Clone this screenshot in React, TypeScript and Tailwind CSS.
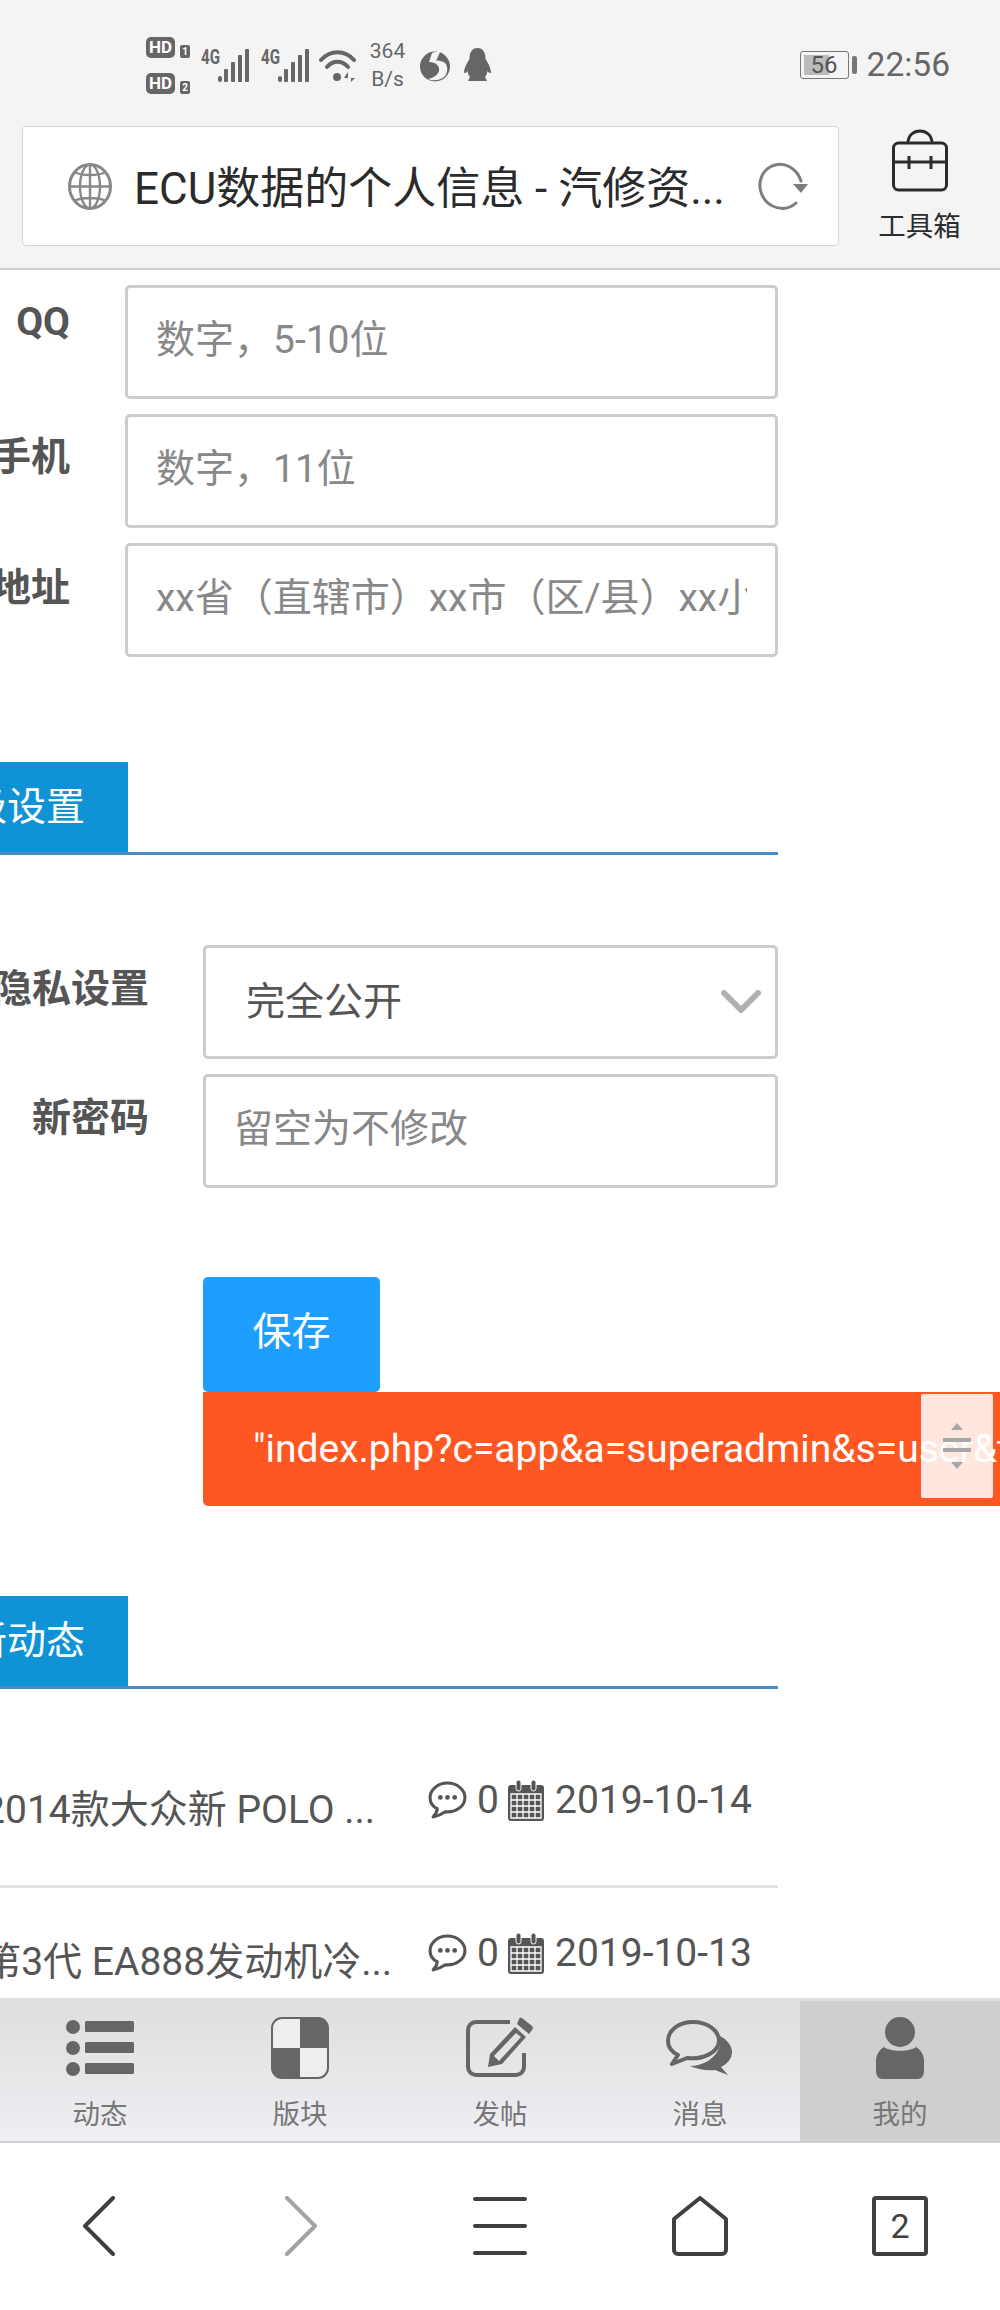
import { ReactNode } from "react";

const Bars = () => (
  <svg width="32" height="33" viewBox="0 0 32 33" fill="#666">
    <rect x="0" y="27" width="4" height="6" rx="2" />
    <rect x="6" y="20" width="4" height="13" rx="1" />
    <rect x="13" y="13" width="4" height="20" rx="1" />
    <rect x="20" y="6" width="4" height="27" rx="1" />
    <rect x="27" y="0" width="4" height="33" rx="1" />
  </svg>
);

const HdBadge = ({ n }: { n: string }) => (
  <div className="flex items-end gap-[5px]">
    <span className="w-[29px] h-[21px] rounded-[5px] bg-[#666] text-white text-[17px] leading-[21px] font-bold text-center">
      HD
    </span>
    <span className="w-[10px] h-[13px] rounded-[2px] bg-[#666] text-white text-[10px] leading-[13px] font-bold text-center">
      {n}
    </span>
  </div>
);

const SignalGroup = () => (
  <div className="ml-[11px] flex items-start">
    <span className="text-[21px] leading-[17px] font-bold w-[17px] scale-x-[0.72] origin-left">4G</span>
    <Bars />
  </div>
);

const StatusBar = () => (
  <div className="h-[126px] flex items-center pl-[146px] pr-[50px] pt-[4px] text-[#666]">
    <div className="flex flex-col gap-[15px]">
      <HdBadge n="1" />
      <HdBadge n="2" />
    </div>
    <SignalGroup />
    <SignalGroup />
    <svg className="ml-[9px]" width="37" height="33" viewBox="0 0 37 33" fill="none">
      <path d="M2 11 C11 0.5 26 0.5 35 11" stroke="#666" strokeWidth="4" strokeLinecap="round" />
      <path d="M8 18 C14 11 23 11 29 18" stroke="#666" strokeWidth="4" strokeLinecap="round" />
      <circle cx="18" cy="28" r="4" fill="#666" />
      <path d="M29 23 L25 29 H29 Z M32 23 V33 L36 29 H32 Z" fill="#666" />
    </svg>
    <div className="ml-[13px] w-[37px] flex flex-col items-center text-[21px] leading-[28px] -mt-[1px]">
      <span>364</span>
      <span>B/s</span>
    </div>
    <svg className="ml-[14px]" width="30" height="33" viewBox="0 0 30 33">
      <circle cx="15" cy="17.5" r="15" fill="#666" />
      <path d="M21 1 L12 4 L9 13 C16 13 20 17 19 22 C18 26 13 29 8 30 C13 32 20 32 25 27 C28 23 28 17 25 14 C22 12 18 11 16 12 Z" fill="#f4f4f4" />
    </svg>
    <svg className="ml-[14px]" width="27" height="35" viewBox="0 0 27 35" fill="#666">
      <path d="M13.5 0 C20 0 21.5 6 21.5 11 C24 15 27 20 27 25 C25 25 24 24 23.5 23 C23 26 22 28 21 29 L23 33 H4 L6 29 C5 28 4 26 3.5 23 C3 24 2 25 0 25 C0 20 3 15 5.5 11 C5.5 6 7 0 13.5 0 Z" />
    </svg>
    <div className="ml-auto flex items-center">
      <div className="relative w-[49px] h-[28px] border-[1.5px] border-[#777] rounded-[3px] flex items-center justify-center text-[24px] text-[#555] p-[3px]">
        <div className="absolute left-[3px] top-[3px] bottom-[3px] w-[25px] bg-[#bbb]" />
        <span className="relative leading-none">56</span>
      </div>
      <div className="ml-[3px] w-[5px] h-[18px] rounded-[2px] bg-[#777]" />
      <span className="ml-[10px] text-[33.5px] leading-none">22:56</span>
    </div>
  </div>
);

const GlobeIcon = () => (
  <svg width="44" height="47" viewBox="0 0 44 47" fill="none" stroke="#888" strokeWidth="2.4" className="shrink-0">
    <ellipse cx="22" cy="23.5" rx="20.5" ry="22" strokeWidth="3" />
    <ellipse cx="22" cy="23.5" rx="10" ry="22" />
    <path d="M22 1.5 V45.5 M1.5 23.5 H42.5 M6 9 C14 13 30 13 38 9 M6 38 C14 34 30 34 38 38" />
  </svg>
);

const ReloadIcon = () => (
  <svg width="50" height="51" viewBox="0 0 50 51" fill="none" className="shrink-0">
    <path d="M43 20 C39 7 26 0 14 5 C3 10 -1 23 4 34 C10 47 27 52 38 42" stroke="#7d7d7d" strokeWidth="3" strokeLinecap="round" />
    <path d="M35 23 H50 L43 32 Z" fill="#7d7d7d" />
  </svg>
);

const ToolboxIcon = () => (
  <svg width="56" height="63" viewBox="0 0 56 63" fill="none" stroke="#2b2b2b" strokeWidth="3">
    <rect x="1.5" y="14" width="53" height="47" rx="5" />
    <path d="M16 14 C16 -2 40 -2 40 14" />
    <path d="M1.5 33 H54.5" />
    <path d="M17 27 V40 M39 27 V40" />
  </svg>
);

const BrowserBar = () => (
  <div className="h-[144px] flex items-start pl-[22px] border-b-2 border-[#cdcdcd]">
    <div className="w-[817px] h-[120px] bg-white border border-[#d6d6d6] rounded-[4px] flex items-center pl-[45px] pr-[30px]">
      <GlobeIcon />
      <span className="ml-[22px] pt-[6px] flex-1 text-[44px] text-[#2b2b2b] whitespace-nowrap">
        ECU数据的个人信息 - 汽修资...
      </span>
      <ReloadIcon />
    </div>
    <div className="flex-1 flex flex-col items-center pt-[3px]">
      <ToolboxIcon />
      <span className="mt-[19px] text-[27.5px] leading-[32px] text-[#2b2b2b]">工具箱</span>
    </div>
  </div>
);

const inputCls =
  "block h-[114px] border-[3px] border-[#ccc] rounded-[5px] bg-white outline-none px-[28px] pb-[5px] text-[39px] placeholder:text-[#888]";

const Field = ({
  label,
  placeholder,
  labelCls = "",
}: {
  label: string;
  placeholder: string;
  labelCls?: string;
}) => (
  <div className="flex items-start">
    <label
      className={`w-[70px] h-[90px] shrink-0 flex justify-end items-center font-bold text-[39px] text-[#555] whitespace-nowrap ${labelCls}`}
    >
      {label}
    </label>
    <input className={`${inputCls} ml-[55px] w-[653px]`} placeholder={placeholder} readOnly />
  </div>
);

const SectionTitle = ({ title }: { title: string }) => (
  <div className="w-[778px] border-b-[3px] border-[#4a8bc2]">
    <div className="w-[128px] h-[90px] bg-[#1093d6] text-white text-[39px] flex items-center justify-end pr-[43px] whitespace-nowrap overflow-hidden">
      {title}
    </div>
  </div>
);

const ChatIcon = () => (
  <svg width="39" height="38" viewBox="0 0 38 37" fill="none" className="shrink-0">
    <path d="M19 2 C9 2 2 9 2 16 C2 21 5 25 9 27 C9 30 7 33 5 35 C10 34 14 32 17 30 C28 31 36 24 36 16 C36 9 29 2 19 2 Z" stroke="#555" strokeWidth="3" strokeLinejoin="round" />
    <circle cx="12" cy="16" r="2.3" fill="#555" />
    <circle cx="19" cy="16" r="2.3" fill="#555" />
    <circle cx="26" cy="16" r="2.3" fill="#555" />
  </svg>
);

const CalendarIcon = () => (
  <svg width="36" height="41" viewBox="0 0 36 41" className="shrink-0">
    <rect x="0" y="5" width="36" height="36" rx="3" fill="#555" />
    <rect x="8" y="0" width="5" height="11" rx="2.5" fill="#555" stroke="#fff" strokeWidth="1" />
    <rect x="23" y="0" width="5" height="11" rx="2.5" fill="#555" stroke="#fff" strokeWidth="1" />
    <path
      d="M3 14 H33 V38 H3 Z M3 20 H33 M3 26 H33 M3 32 H33 M9 14 V38 M15 14 V38 M21 14 V38 M27 14 V38"
      fill="none"
      stroke="#fff"
      strokeWidth="1.3"
    />
  </svg>
);

const NewsRow = ({
  title,
  date,
  titleCls,
  metaCls,
  rowCls,
}: {
  title: string;
  date: string;
  titleCls: string;
  metaCls: string;
  rowCls: string;
}) => (
  <div className={`w-[778px] flex items-start text-[#555] ${rowCls}`}>
    <div className={`w-[428px] h-[50px] flex items-center justify-end whitespace-nowrap text-[39px] ${titleCls}`}>
      {title}
    </div>
    <div className={`flex items-center ${metaCls}`}>
      <ChatIcon />
      <span className="ml-[10px] w-[31px] text-[39px] leading-[46px]">0</span>
      <CalendarIcon />
      <span className="ml-[11px] text-[39px] leading-[46px]">{date}</span>
    </div>
  </div>
);

const MainContent = () => (
  <div className="flex-1 min-h-0 overflow-hidden bg-white">
    <div className="pt-[15px] flex flex-col gap-[15px]">
      <Field label="QQ" placeholder="数字，5-10位" labelCls="-mt-[8px]" />
      <Field label="手机" placeholder="数字，11位" labelCls="-mt-[2px]" />
      <Field label="地址" placeholder="xx省（直辖市）xx市（区/县）xx小区xx号" />
    </div>

    <div className="mt-[105px]">
      <SectionTitle title="高级设置" />
    </div>

    <div className="mt-[90px] flex flex-col gap-[15px]">
      <div className="flex items-start">
        <label className="w-[149px] h-[88px] shrink-0 flex justify-end items-center font-bold text-[39px] text-[#555] whitespace-nowrap">
          隐私设置
        </label>
        <div className="relative ml-[54px]">
          <div className="w-[575px] h-[114px] border-[3px] border-[#ccc] rounded-[5px] flex items-center pl-[40px] text-[39px] text-[#555]">
            完全公开
          </div>
          <svg className="absolute right-[17px] top-[45px]" width="40" height="24" viewBox="0 0 40 24" fill="none">
            <path d="M3 3 L20 20 L37 3" stroke="#b0b0b0" strokeWidth="6" strokeLinecap="round" strokeLinejoin="round" />
          </svg>
        </div>
      </div>
      <div className="flex items-start">
        <label className="w-[149px] h-[88px] shrink-0 flex justify-end items-center font-bold text-[39px] text-[#555] whitespace-nowrap">
          新密码
        </label>
        <input className={`${inputCls} ml-[54px] w-[575px]`} placeholder="留空为不修改" readOnly />
      </div>
    </div>

    <div className="relative mt-[89px] pl-[203px] flex flex-col items-start">
      <button className="w-[177px] h-[115px] pb-[5px] bg-[#1e9fff] rounded-[5px] text-white text-[39px]">保存</button>
      <div className="w-[797px] h-[114px] bg-[#ff5722] rounded-bl-[5px] flex items-center pl-[50px] text-white text-[39px] whitespace-nowrap overflow-hidden">
        "index.php?c=app&amp;a=superadmin&amp;s=user&amp;t
      </div>
      <div className="absolute left-[921px] top-[117px] w-[72px] h-[104px] rounded-[2px] bg-white/85 flex flex-col items-center justify-center">
        <svg width="28" height="46" viewBox="0 0 28 46" fill="#a8a8a8">
          <path d="M14 0 L20 7 H8 Z" />
          <rect x="0" y="15" width="28" height="4" />
          <rect x="0" y="25" width="28" height="4" />
          <path d="M14 46 L20 39 H8 Z" />
        </svg>
      </div>
    </div>

    <div className="mt-[90px]">
      <SectionTitle title="最新动态" />
    </div>

    <NewsRow
      title="2014款大众新 POLO ..."
      date="2019-10-14"
      titleCls="pr-[53px] mt-[96px]"
      metaCls="mt-[88px]"
      rowCls="h-[199px] border-b-[3px] border-[#e2e2e2]"
    />
    <NewsRow
      title="第3代 EA888发动机冷..."
      date="2019-10-13"
      titleCls="pr-[36px] mt-[49px]"
      metaCls="mt-[42px]"
      rowCls="h-[110px]"
    />
  </div>
);

const TabItem = ({ icon, label, active }: { icon: ReactNode; label: string; active?: boolean }) => (
  <div className={`flex-1 flex flex-col items-center ${active ? "bg-[#cfcfcf] mt-[3px]" : ""}`}>
    <div className={`h-[66px] flex items-center justify-center ${active ? "mt-[14px]" : "mt-[17px]"}`}>{icon}</div>
    <span className="mt-[18px] text-[27.5px] leading-[32px] text-[#777]">{label}</span>
  </div>
);

const TabBar = () => (
  <div className="shrink-0 h-[145px] flex bg-gradient-to-b from-[#dedede] to-[#efeff4] border-b-2 border-[#cfcfcf]">
    <TabItem
      label="动态"
      icon={
        <svg width="68" height="58" viewBox="0 0 68 58" fill="#666">
          <circle cx="7" cy="8" r="7" />
          <circle cx="7" cy="29" r="7" />
          <circle cx="7" cy="50" r="7" />
          <rect x="19" y="2" width="49" height="11" rx="1.5" />
          <rect x="19" y="23" width="49" height="11" rx="1.5" />
          <rect x="19" y="44" width="49" height="11" rx="1.5" />
        </svg>
      }
    />
    <TabItem
      label="版块"
      icon={
        <svg width="58" height="62" viewBox="0 0 58 62">
          <rect x="1" y="1" width="56" height="60" rx="10" fill="#eee" stroke="#666" strokeWidth="2" />
          <path d="M29 1 H47 A10 10 0 0 1 57 11 V31 H29 Z M1 31 H29 V61 H11 A10 10 0 0 1 1 51 Z" fill="#666" />
        </svg>
      }
    />
    <TabItem
      label="发帖"
      icon={
        <svg width="68" height="62" viewBox="0 0 68 62" fill="none">
          <path d="M58 36 V50 A8 8 0 0 1 50 58 H10 A8 8 0 0 1 2 50 V13 A8 8 0 0 1 10 5 H44" stroke="#666" strokeWidth="4" />
          <path d="M56 1 L66 9 A3 3 0 0 1 66 13 L63 17 L51 7 L53 2 A2 2 0 0 1 56 1 Z" fill="#666" />
          <path d="M49 10 L60 20 L36 47 L22 50 L24 37 Z M28 39 L33 44 L55 20 L50 16 Z" fill="#666" fillRule="evenodd" />
        </svg>
      }
    />
    <TabItem
      label="消息"
      icon={
        <svg width="68" height="58" viewBox="0 0 68 58" fill="none">
          <path d="M54 17 C60 20 66 26 66 33 C66 40 61 45 55 48 L62 56 L49 51 C40 52 31 50 24 47 C38 47 50 39 54 27 Z" fill="#666" />
          <path d="M27 3 C13 3 2 11 2 22 C2 28 6 33 12 36 L6 45 L21 39 C37 41 53 33 53 22 C53 11 41 3 27 3 Z" stroke="#666" strokeWidth="4" strokeLinejoin="round" />
        </svg>
      }
    />
    <TabItem
      active
      label="我的"
      icon={
        <svg width="48" height="62" viewBox="0 0 48 62" fill="#666">
          <circle cx="24" cy="15" r="15" />
          <path d="M8 30 C14 35 34 35 40 30 C45 33 48 38 48 44 V54 C48 59 45 62 42 62 H6 C3 62 0 59 0 54 V44 C0 38 3 33 8 30 Z" />
        </svg>
      }
    />
  </div>
);

const NavBar = () => (
  <div className="shrink-0 h-[167px] bg-white flex items-start pt-[53px]">
    <div className="flex-1 flex justify-center">
      <svg width="60" height="60" viewBox="0 0 60 60" fill="none">
        <path d="M43 2 L15 30 L43 58" stroke="#3f3f3f" strokeWidth="4" strokeLinecap="round" strokeLinejoin="round" />
      </svg>
    </div>
    <div className="flex-1 flex justify-center">
      <svg width="60" height="60" viewBox="0 0 60 60" fill="none">
        <path d="M17 2 L45 30 L17 58" stroke="#a3a3a3" strokeWidth="4" strokeLinecap="round" strokeLinejoin="round" />
      </svg>
    </div>
    <div className="flex-1 flex justify-center">
      <svg width="54" height="60" viewBox="0 0 54 60" fill="none">
        <path d="M2 3 H52 M2 30 H52 M2 57 H52" stroke="#3f3f3f" strokeWidth="4" strokeLinecap="round" />
      </svg>
    </div>
    <div className="flex-1 flex justify-center">
      <svg width="56" height="60" viewBox="0 0 56 60" fill="none">
        <path d="M28 2 L54 23 V54 A4 4 0 0 1 50 58 H6 A4 4 0 0 1 2 54 V23 Z" stroke="#3f3f3f" strokeWidth="4" strokeLinejoin="round" />
      </svg>
    </div>
    <div className="flex-1 flex justify-center">
      <div className="w-[56px] h-[60px] border-4 border-[#3f3f3f] rounded-[4px] flex items-center justify-center text-[34px] text-[#3f3f3f]">
        2
      </div>
    </div>
  </div>
);

export default function App() {
  return (
    <div className="w-[1000px] h-[2310px] flex flex-col overflow-hidden bg-[#f4f4f4] font-[Roboto,'Noto_Sans_CJK_SC',sans-serif]">
      <StatusBar />
      <BrowserBar />
      <MainContent />
      <TabBar />
      <NavBar />
    </div>
  );
}
